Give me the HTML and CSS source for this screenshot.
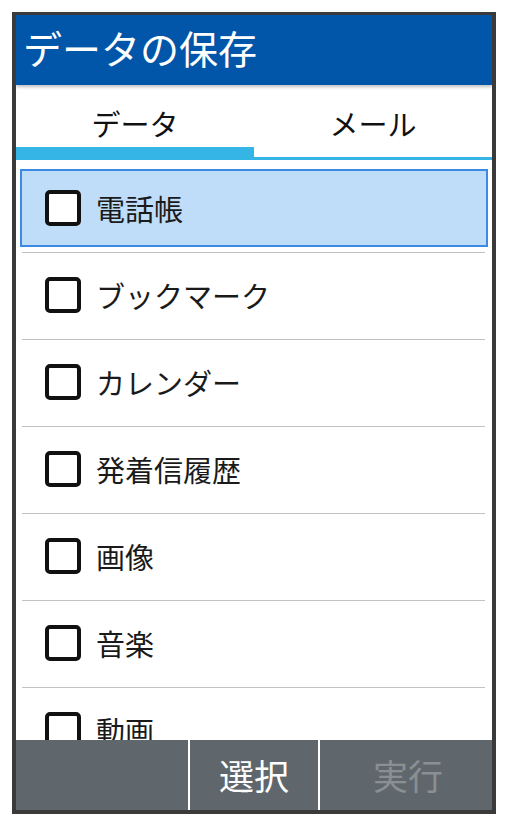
FILE: index.html
```html
<!DOCTYPE html>
<html lang="ja">
<head>
  <meta charset="UTF-8" />
  <meta name="viewport" content="width=device-width, initial-scale=1" />
  <title>データの保存</title>
  <link rel="stylesheet" href="styles.css">
</head>

<body>

  <div class="phone">

    <!-- Header -->
    <header class="title-bar">データの保存</header>

    <!-- Tabs -->
    <div class="tabs">
      <div class="tab active">データ</div>
      <div class="tab">メール</div>
    </div>

    <!-- Items -->
    <div class="list">
      <div class="row">
        <div class="cell selected"><span class="check"></span><span class="label">電話帳</span></div>
      </div>
      <div class="row">
        <div class="cell"><span class="check"></span><span class="label">ブックマーク</span></div>
      </div>
      <div class="row">
        <div class="cell"><span class="check"></span><span class="label">カレンダー</span></div>
      </div>
      <div class="row">
        <div class="cell"><span class="check"></span><span class="label">発着信履歴</span></div>
      </div>
      <div class="row">
        <div class="cell"><span class="check"></span><span class="label">画像</span></div>
      </div>
      <div class="row">
        <div class="cell"><span class="check"></span><span class="label">音楽</span></div>
      </div>
      <div class="row">
        <div class="cell"><span class="check"></span><span class="label">動画</span></div>
      </div>
    </div>

    <!-- Soft keys -->
    <div class="softkeys">
      <div class="key key-left"></div>
      <div class="key key-center">選択</div>
      <div class="key key-right disabled">実行</div>
    </div>

  </div>

</body>
</html>
```

FILE: styles.css
```css
body {
  margin: 0;
  background-color: #fff;
  font-family: "Noto Sans CJK JP", "Noto Sans", sans-serif;
  color: #111;
}

.phone {
  margin: 12px 0 0 12px;
  width: 476px;
  height: 795px;
  border: 4px solid #3a3a3a;
  border-top-width: 3px;
  display: flex;
  flex-direction: column;
  background-color: #fff;
  overflow: hidden;
}

.title-bar {
  height: 70px;
  flex-shrink: 0;
  background-color: #0156aa;
  color: #fff;
  font-size: 39px;
  line-height: 64px;
  padding-left: 7px;
  box-shadow: 0 2px 3px rgba(0, 0, 0, 0.25);
  position: relative;
  z-index: 1;
}

.tabs {
  display: flex;
  height: 75px;
  flex-shrink: 0;
  box-sizing: border-box;
  border-bottom: 3px solid #35b5e5;
}

.tab {
  flex: 1;
  height: 72px;
  box-sizing: border-box;
  padding-top: 2px;
  text-align: center;
  font-size: 29px;
  line-height: 72px;
  color: #111;
}

.tab.active {
  box-shadow: inset 0 -10px 0 #35b5e5;
}

.list {
  flex: 1;
  overflow: hidden;
  padding-top: 6px;
}

.row {
  height: 87px;
  box-sizing: border-box;
  margin: 0 7px 0 6px;
  border-bottom: 1px solid #c0c2c3;
  padding: 3px 0 5px;
}

.cell {
  height: 78px;
  box-sizing: border-box;
  margin: 0 -3px 0 -2px;
  border: 2px solid transparent;
  display: flex;
  align-items: center;
  padding-left: 23px;
}

.cell.selected {
  background-color: #bfdcf9;
  border-color: #3b8be6;
}

.check {
  width: 36px;
  height: 36px;
  box-sizing: border-box;
  border: 4px solid #111;
  border-radius: 5px;
  background-color: #fff;
  flex-shrink: 0;
  margin-right: 15px;
}

.label {
  font-size: 29px;
  color: #1a1a1a;
}

.softkeys {
  display: flex;
  height: 70px;
  flex-shrink: 0;
  background-color: #5f676c;
}

.key {
  color: #fff;
  font-size: 35px;
  line-height: 70px;
  text-align: center;
}

.key-left {
  width: 172px;
}

.key-center {
  width: 128px;
  border-left: 2px solid #fff;
  border-right: 2px solid #fff;
}

.key-right {
  flex: 1;
  padding-left: 4px;
}

.key.disabled {
  color: #8a8f92;
}
```
